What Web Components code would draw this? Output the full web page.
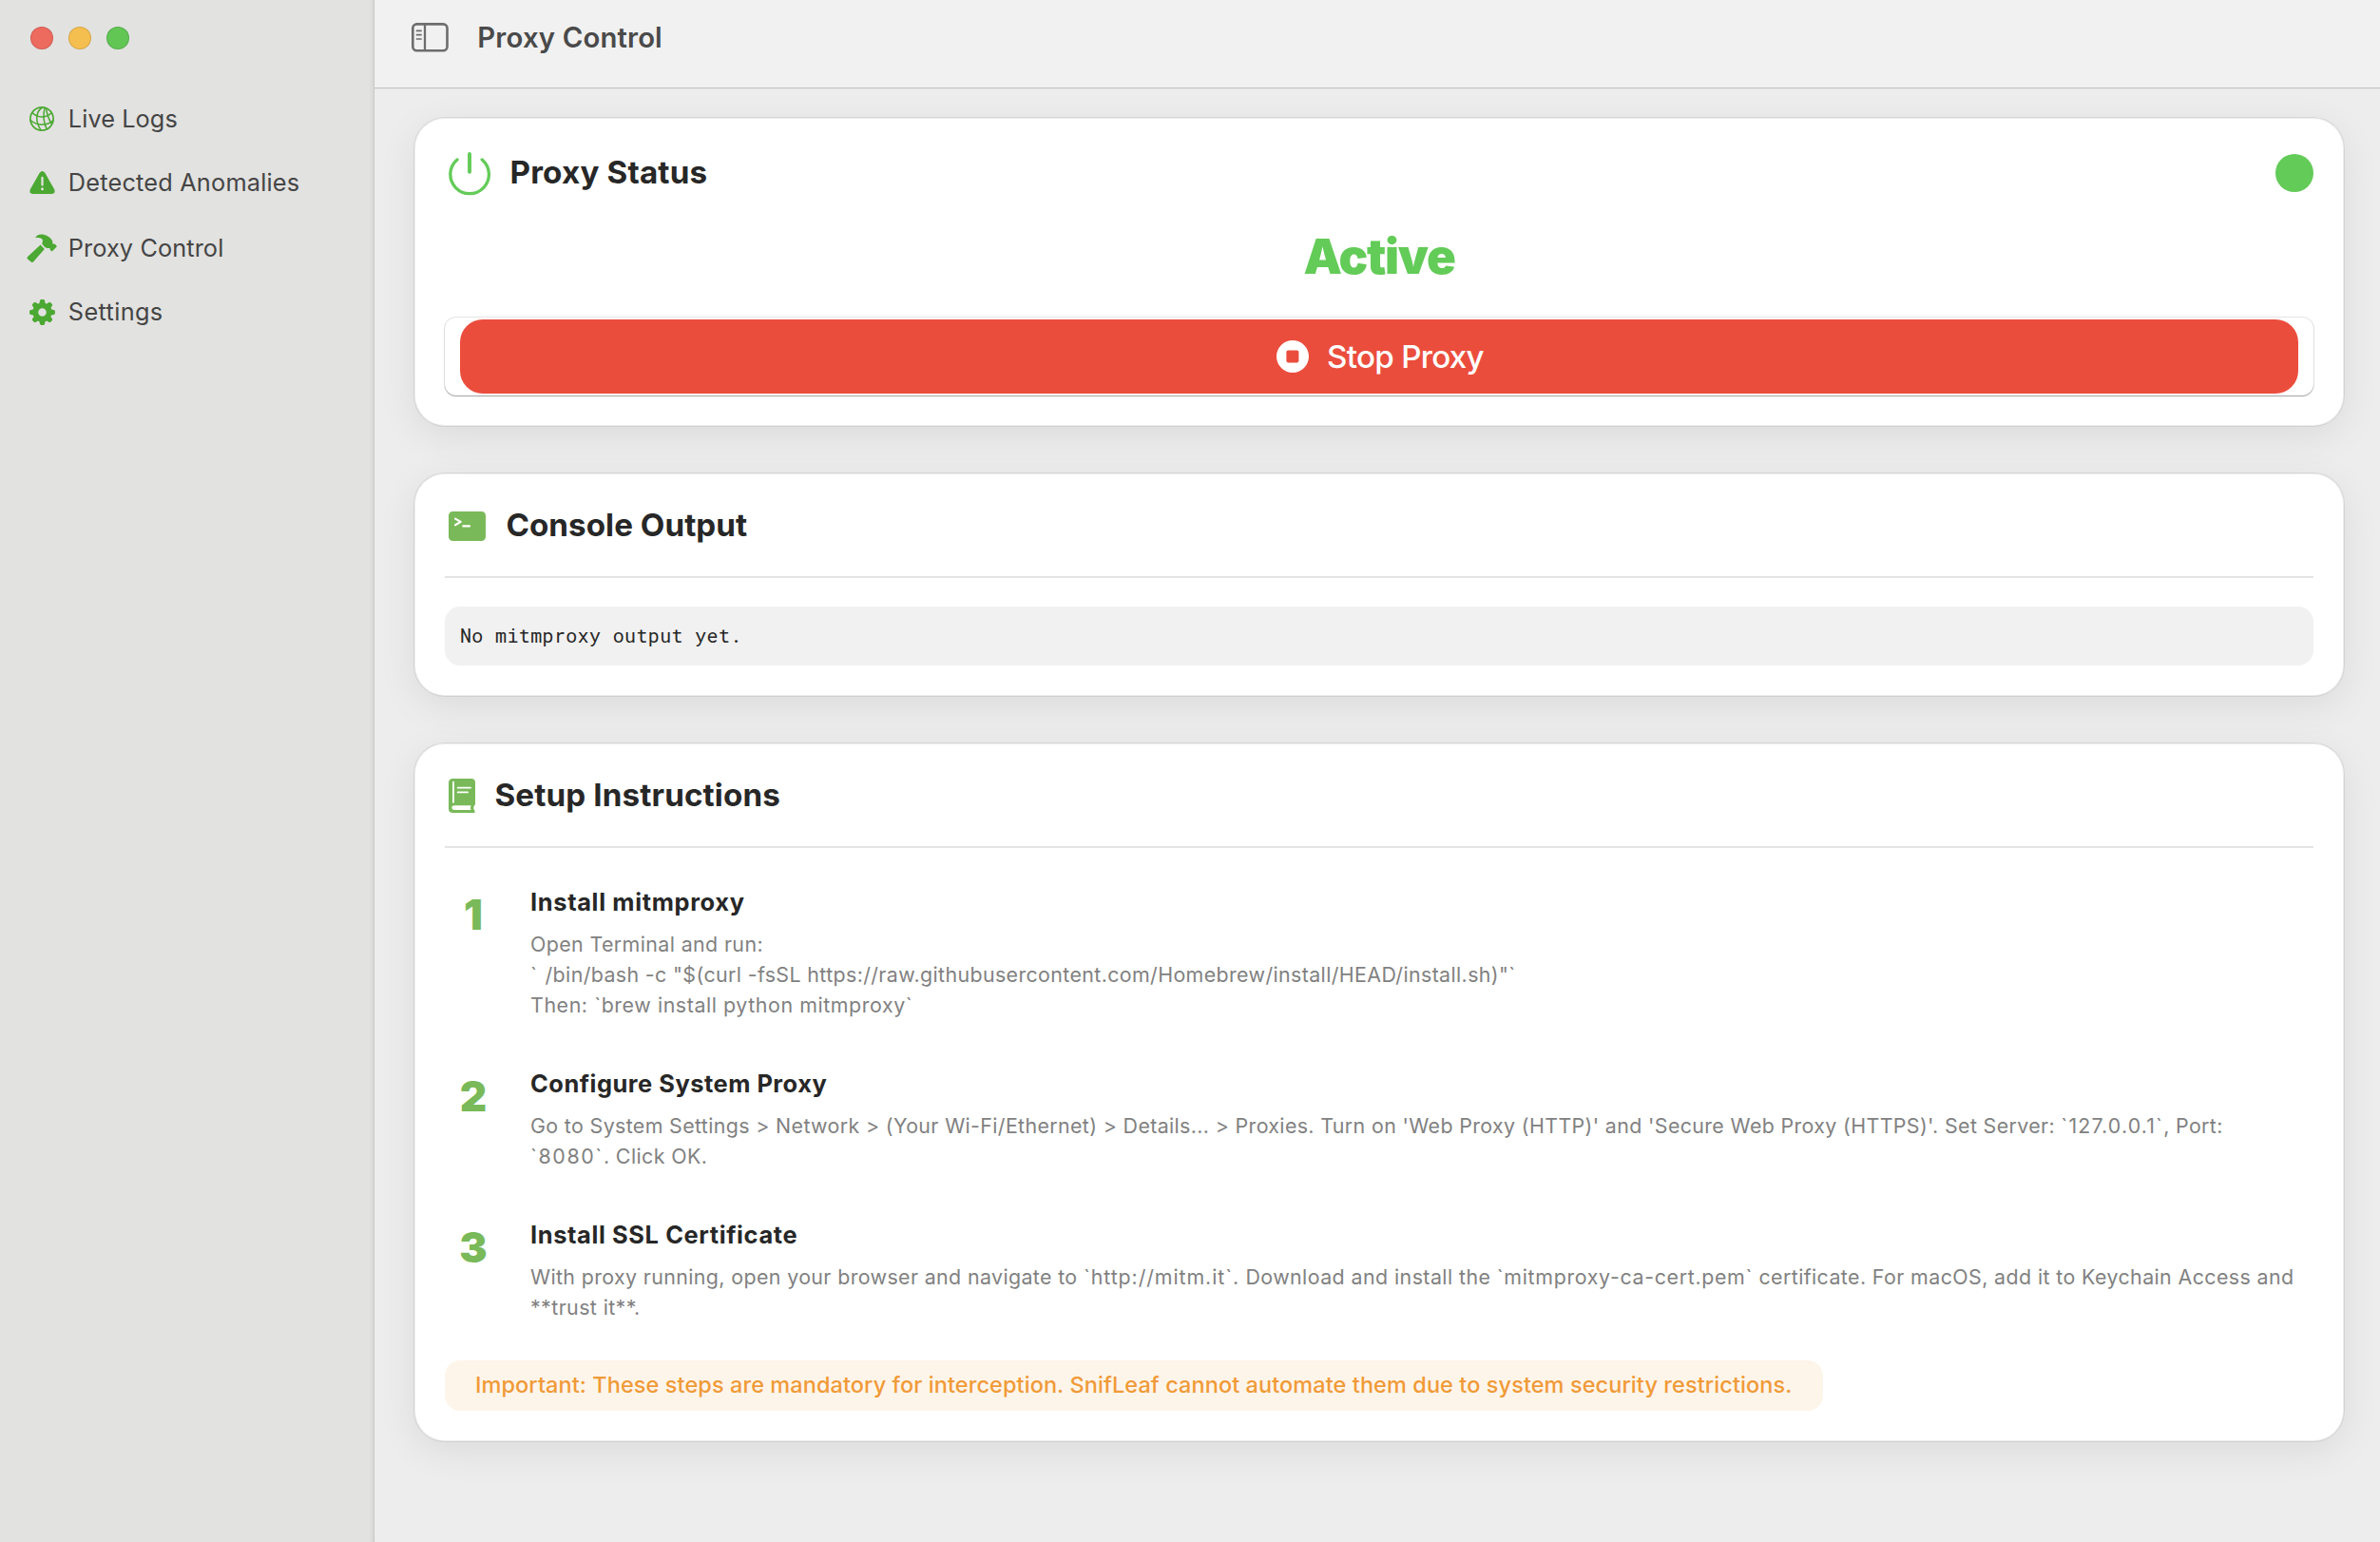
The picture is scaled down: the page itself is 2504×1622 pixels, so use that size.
<!DOCTYPE html>
<html lang="en">
<head>
<meta charset="utf-8">
<title>Proxy Control</title>
<style>
  html, body { margin: 0; height: 100%; }
  body { font-family: Inter, "Liberation Sans", sans-serif; background: #ededed; overflow: hidden; color: #272727; }
</style>
</head>
<body>
<app-window>
  <side-bar slot="sidebar">
    <nav-item icon="globe" style="height:68px;letter-spacing:.08px">Live Logs</nav-item>
    <nav-item icon="warning" style="height:66px;letter-spacing:.2px">Detected Anomalies</nav-item>
    <nav-item icon="hammer" style="height:72px;letter-spacing:.1px">Proxy Control</nav-item>
    <nav-item icon="gear" style="height:62px;letter-spacing:.36px">Settings</nav-item>
  </side-bar>
  <title-bar slot="titlebar">Proxy Control</title-bar>

  <panel-card>
    <card-heading icon="power" style="--gap:20.6px;--h:52px;--lift:2px;letter-spacing:.16px">Proxy Status<status-dot slot="end"></status-dot></card-heading>
    <status-label>Active</status-label>
    <stop-button>Stop Proxy</stop-button>
  </panel-card>

  <panel-card>
    <card-heading icon="terminal" divided style="--gap:21.4px;letter-spacing:.04px">Console Output</card-heading>
    <console-output>No mitmproxy output yet.</console-output>
  </panel-card>

  <panel-card>
    <card-heading icon="book" divided style="--gap:20.5px;letter-spacing:.12px">Setup Instructions</card-heading>
    <step-list>
      <setup-step number="1">
        <span slot="title" style="letter-spacing:.66px">Install mitmproxy</span>
        <text-line style="letter-spacing:.38px">Open Terminal and run:</text-line>
        <text-line style="letter-spacing:.37px"><span style="letter-spacing:1.3px">` </span>/bin/bash -c "$(curl -fsSL https://raw.githubusercontent.com/Homebrew/install/HEAD/install.sh)"`</text-line>
        <text-line style="letter-spacing:.57px">Then: `brew install python mitmproxy`</text-line>
      </setup-step>
      <setup-step number="2">
        <span slot="title" style="letter-spacing:.52px">Configure System Proxy</span>
        <text-line style="letter-spacing:.355px">Go to System Settings &gt; Network &gt; (Your Wi-Fi/Ethernet) &gt; Details... &gt; Proxies. Turn on 'Web Proxy (HTTP)' and 'Secure Web Proxy (HTTPS)'. Set Server: <span style="letter-spacing:1.15px">`127.0.0.1`</span>, Port:</text-line>
        <text-line style="letter-spacing:.4px"><span style="letter-spacing:1.6px">`8080`</span>. Click OK.</text-line>
      </setup-step>
      <setup-step number="3">
        <span slot="title" style="letter-spacing:.62px">Install SSL Certificate</span>
        <text-line style="letter-spacing:.37px">With proxy running, open your browser and navigate to <span style="letter-spacing:.9px">`http://mitm.it`.</span> <span style="letter-spacing:.42px">Download and install the </span><span style="letter-spacing:.66px">`mitmproxy-ca-cert.pem`</span> <span style="letter-spacing:.395px">certificate. For macOS, add it to Keychain Access and</span></text-line>
        <text-line style="letter-spacing:.4px">**trust it**.</text-line>
      </setup-step>
    </step-list>
    <notice-bar>Important: These steps are mandatory for interception. SnifLeaf cannot automate them due to system security restrictions.</notice-bar>
  </panel-card>
</app-window>

<script>
const define = (name, html, setup) => customElements.define(name, class extends HTMLElement {
  constructor() {
    super();
    this.attachShadow({ mode: 'open' });
  }
  connectedCallback() {
    this.shadowRoot.innerHTML = html;
    if (setup) setup(this, this.shadowRoot);
  }
});

const tooth = [0, 45, 90, 135, 180, 225, 270, 315]
  .map(a => `<path transform="rotate(${a} 13.5 13.5)" d="M10.2 5 L10.9 1.5 Q11.2 .1 12.4 .1 H14.6 Q15.8 .1 16.1 1.5 L16.8 5Z"/>`).join('');

const ICONS = {
  globe: [26, 26, `<g fill="none" stroke="currentColor" stroke-width="1.5" stroke-linecap="round">
    <circle cx="13" cy="13" r="12.1" stroke-width="1.7"/>
    <path d="M13.5 1C6.5 5.5 5.8 15.5 12 24.8"/><path d="M16 1.3C14.2 9 15 17.5 18.2 23.8"/><path d="M17.6 1.8C18.4 8 20 13 23.2 18"/>
    <path d="M3 6.6C8.5 12.4 17 12.6 23.2 6.8"/><path d="M1.2 14.5C8 20.6 18.5 20.6 24.8 14.8"/></g>`],
  warning: [27, 24, `<path fill="currentColor" d="M10.7 1.7Q13.5-1.5 16.3 1.7L26.2 19.2Q27.8 23.6 23.4 24H3.6Q-.8 23.6 .8 19.2Z"/>
    <path d="M13.5 7V14.6" stroke="#e2e2e0" stroke-width="2.3" stroke-linecap="round"/><circle cx="13.5" cy="18.7" r="1.5" fill="#e2e2e0"/>`],
  hammer: [32, 31, `<g fill="currentColor"><path d="M14.6 11.4L18.8 15.9L7.2 29.3Q6 30.6 4.8 29.5L1 26.4Q-.2 25.2 1.1 24Z"/>
    <path d="M9.2 4C10.6 1.4 13.4 .3 16.4 .5C20.6 .8 24.4 3.4 26.6 6.4C27.6 7.8 27.2 9.4 27.6 10.7L29.7 10.5L31.9 13.2L26.8 18.6L24.4 16.6L24.6 14.9C22.6 15.2 20.4 15 18.7 13.4L16.2 10.4C16.6 8.8 17.4 7.4 16.6 6C15.4 3.9 12 4.4 9.2 4Z"/></g>`],
  gear: [27, 27, `<g fill="currentColor">${tooth}</g><circle cx="13.5" cy="13.5" r="7.2" fill="none" stroke="currentColor" stroke-width="5.8"/>`],
  power: [44, 46, `<g fill="none" stroke="currentColor" stroke-linecap="round"><path stroke-width="3.3" d="M9 7.9A20.3 20.3 0 1 0 35.2 7.9"/><path stroke-width="3.9" d="M22 2V20.8"/></g>`],
  terminal: [39, 31, `<rect width="39" height="31" rx="4.4" fill="currentColor"/>
    <path d="M7 7.6L12.7 10.9L7 14.2M15.3 15.4H22" fill="none" stroke="#fff" stroke-width="2.2" stroke-linecap="round" stroke-linejoin="round"/>`],
  book: [28, 36, `<path fill="currentColor" d="M4.5 0H23.5Q28 0 28 4.2V26.4Q28 27.9 26.8 28.8Q25.4 31 27.5 34Q28.4 36 26.6 36H4.6Q0 36 0 31.4V4.5Q0 0 4.5 0Z"/>
    <path fill="#fff" d="M6 28.2H23.6Q22.4 30.4 23.6 32.9H6Q3.4 32.9 3.4 30.6Q3.4 28.2 6 28.2Z"/>
    <path d="M5 3.6V24.8M9.7 9.6H23M9.7 14.4H20" stroke="#fff" stroke-width="1.9" stroke-linecap="round"/>`],
  sidebar: [39, 31, `<g fill="none" stroke="currentColor"><rect x="1.3" y="1.4" width="36.2" height="27.8" rx="4.2" stroke-width="2.6"/>
    <path stroke-width="2.3" d="M14 1.4V29"/><path stroke-width="1.7" stroke-linecap="round" d="M5.5 8.4H10M5.5 12.7H10M5.5 17H10"/></g>`],
  stop: [34, 34, `<circle cx="17" cy="17" r="17" fill="currentColor"/><rect x="10.4" y="10.4" width="13" height="13" rx="1.8" fill="#eb4d3d"/>`]
};

define('sf-icon', `<style>:host{display:block;flex:none;line-height:0}svg{display:block;overflow:visible}</style>`, (el, root) => {
  const [w, h, body] = ICONS[el.getAttribute('name')];
  root.innerHTML += `<svg width="${w}" height="${h}" viewBox="0 0 ${w} ${h}">${body}</svg>`;
});

const placeIcon = (el, root) => {
  const icon = document.createElement('sf-icon');
  icon.setAttribute('name', el.getAttribute('icon'));
  root.querySelector('.icon').append(icon);
};

define('app-window', `<style>
  :host{display:flex;width:100%;height:100vh;background:#ededed}
  .content{flex:1;min-width:0;display:flex;flex-direction:column}
  main{flex:1;display:flex;flex-direction:column;gap:50px;padding:31px 38px 0 42px}
</style><slot name="sidebar"></slot><div class="content"><slot name="titlebar"></slot><main><slot></slot></main></div>`);

define('side-bar', `<style>
  :host{display:block;box-sizing:border-box;width:394px;flex:none;background:#e2e2e0;border-right:1px solid #c9c9c7;box-shadow:inset -5px 0 5px -4px rgba(0,0,0,.07)}
  .lights{display:flex;gap:16px;padding:28px 0 39px 32px}
  .lights i{width:24px;height:24px;border-radius:50%;box-sizing:border-box;border:1px solid rgba(0,0,0,.13)}
  .r{background:#ed6a5f}.y{background:#f5bf50}.g{background:#62c655}
  nav{display:flex;flex-direction:column}
</style><div class="lights"><i class="r"></i><i class="y"></i><i class="g"></i></div><nav><slot></slot></nav>`);

define('nav-item', `<style>
  :host{display:flex;align-items:center;padding-left:28px;font-size:25.3px;line-height:32px;color:#454545}
  .icon{width:32px;display:flex;justify-content:center;margin-right:11.8px;color:#4ba832}
</style><span class="icon"></span><slot></slot>`, placeIcon);

define('title-bar', `<style>
  :host{display:flex;align-items:center;box-sizing:border-box;height:93px;flex:none;padding:0 0 13px 39px;gap:30.3px;background:#f1f1f1;border-bottom:1px solid #c6c6c6;box-shadow:0 1px 0 #e4e4e4;font-size:29.3px;font-weight:600;color:#4a4a4a;letter-spacing:.16px}
  sf-icon{color:#6d6d6d}
</style><sf-icon name="sidebar"></sf-icon><slot></slot>`);

define('panel-card', `<style>
  :host{display:flex;flex-direction:column;align-items:stretch;padding:32px;border-radius:32px;background:#fff;
    box-shadow:inset 0 0 0 1px rgba(0,0,0,.07),0 0 0 1px rgba(0,0,0,.07),0 10px 40px rgba(0,0,0,.08)}
</style><slot></slot>`);

define('card-heading', `<style>
  :host{display:block;font-size:33.2px;font-weight:700;line-height:40px;color:#272727}
  .row{display:flex;align-items:center;height:var(--h,44px);padding-left:4px}
  .text{flex:1;padding-bottom:var(--lift,0);margin-left:var(--gap)}
  .icon{color:#79b959;padding-top:2px}
  :host([icon=power]) .icon{color:#63cb58}
  hr{display:none;border:0;height:2px;background:#e4e4e4;margin:32px 0 30px}
  :host([divided]) hr{display:block}
</style><div class="row"><span class="icon"></span><span class="text"><slot></slot></span><slot name="end"></slot></div><hr>`, placeIcon);

define('status-dot', `<style>:host{display:block;width:40px;height:40px;border-radius:50%;background:#63cb58}</style>`);

define('status-label', `<style>
  :host{display:block;margin:32px 0 34px;height:60px;line-height:60px;text-align:center;font-size:51px;font-weight:900;letter-spacing:-1.3px;color:#63cb58}
</style><slot></slot>`);

define('stop-button', `<style>
  :host{display:block;padding:2px 16px;border-radius:12px;background:#fff;box-shadow:0 0 0 1px rgba(0,0,0,.1),0 1px 1px 0 rgba(0,0,0,.3)}
  button{display:flex;box-sizing:border-box;width:100%;height:78px;align-items:center;justify-content:center;gap:19px;border:0;padding:0 0 1px 2px;border-radius:24px;background:#eb4d3d;color:#fff;font:450 33.2px/40px Inter,"Liberation Sans",sans-serif;letter-spacing:-.74px}
</style><button><sf-icon name="stop"></sf-icon><span><slot></slot></span></button>`);

define('console-output', `<style>
  :host{display:block;padding:0 16px;height:62px;line-height:61px;border-radius:16px;background:#f1f1f1;font-family:"Roboto Mono","DejaVu Sans Mono",monospace;font-size:20px;letter-spacing:.36px;color:#272727}
</style><slot></slot>`);

define('step-list', `<style>:host{display:flex;flex-direction:column;gap:51px;margin:11px 0 40px}</style><slot></slot>`);

define('setup-step', `<style>
  :host{display:flex;gap:30px}
  .num{width:60px;text-align:center;font-size:44px;font-weight:900;line-height:58px;height:58px;color:#79b959}
  .title{font-size:25.4px;font-weight:700;line-height:32px;margin-bottom:12px;color:#272727}
  .body{font-size:21.4px;line-height:32px;color:#818181}
</style><div class="num"></div><div><div class="title"><slot name="title"></slot></div><div class="body"><slot></slot></div></div>`,
  (el, root) => { root.querySelector('.num').textContent = el.getAttribute('number'); });

define('text-line', `<style>:host{display:block;white-space:nowrap}</style><slot></slot>`);

define('notice-bar', `<style>
  :host{display:block;align-self:flex-start;box-sizing:border-box;width:1449.5px;height:53px;line-height:51px;padding-left:32px;border-radius:16px;background:#fef5ea;color:#f09a38;font-size:23.5px;font-weight:500;letter-spacing:.08px;white-space:nowrap}
</style><slot></slot>`);
</script>
</body>
</html>
